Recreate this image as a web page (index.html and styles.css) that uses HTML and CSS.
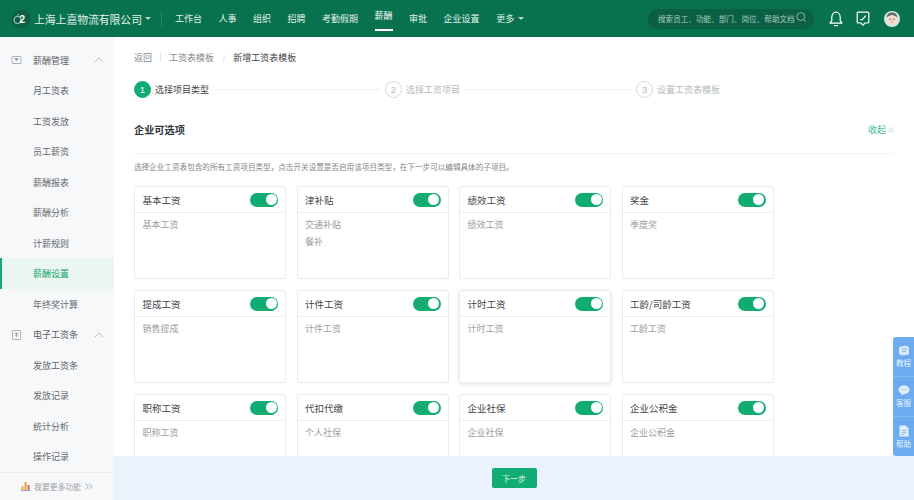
FILE: index.html
```html
<!DOCTYPE html>
<html>

<head>
    <meta charset="utf-8">
    <title>新增工资表模板</title>
    <link rel="stylesheet" href="styles.css">
</head>

<body>
    <header class="topbar">
        <svg class="logo" width="20" height="20" viewBox="0 0 20 20">
            <circle cx="10" cy="10" r="9.5" fill="#0b5f45" />
            <circle cx="6.5" cy="11" r="3.6" fill="none" stroke="#d5e6df" stroke-width="0.9" />
            <path d="M6 6.8 L8 5" stroke="#d5e6df" stroke-width="0.8" fill="none" />
            <text x="8.4" y="14" class="logo-two">2</text>
        </svg>
        <div class="company">上海上嘉物流有限公司</div>
        <span class="caret company-caret"></span>
        <span class="top-divider"></span>
        <nav class="nav">
            <a>工作台</a>
            <a>人事</a>
            <a>组织</a>
            <a>招聘</a>
            <a>考勤假期</a>
            <a class="nav-active">薪酬</a>
            <a>审批</a>
            <a>企业设置</a>
            <a>更多<span class="caret"></span></a>
        </nav>
        <div class="search">
            <span>搜索员工、功能、部门、岗位、帮助文档</span>
            <svg width="11" height="11" viewBox="0 0 11 11" fill="none" stroke="#a9cdbf" stroke-width="0.8">
                <circle cx="4.8" cy="4.6" r="3.9" />
                <path d="M7.6 7.5 L10.2 10" />
            </svg>
        </div>
        <svg class="top-icon" width="14" height="16" viewBox="0 0 14 16" fill="none" stroke="#fff" stroke-width="1.2">
            <path d="M1 12.2 H13 L11.2 9.6 V6.4 C11.2 3.6 9.5 1.2 7 1.2 C4.5 1.2 2.8 3.6 2.8 6.4 V9.6 Z" stroke-linejoin="round" />
            <path d="M5 14.6 H9" />
        </svg>
        <svg class="top-icon chat-icon" width="14" height="16" viewBox="0 0 14 16" fill="none" stroke="#fff" stroke-width="1.2">
            <path d="M2.2 1.2 H11.8 A1 1 0 0 1 12.8 2.2 V11 A1 1 0 0 1 11.8 12 H9 L7 14.2 L5 12 H2.2 A1 1 0 0 1 1.2 11 V2.2 A1 1 0 0 1 2.2 1.2 Z" stroke-linejoin="round" />
            <path d="M4.2 8.6 H6.4 L9.8 4.6" />
        </svg>
        <svg class="avatar" width="16" height="16" viewBox="0 0 16 16">
            <circle cx="8" cy="8" r="8" fill="#d9e6e6" />
            <path d="M2.6 6.6 C3 2.8 5.6 1.6 8 1.6 C10.6 1.6 13 2.8 13.4 6.6 L11.8 5.2 H4.2 Z" fill="#5d6b72" />
            <ellipse cx="8" cy="8.8" rx="4.4" ry="4.8" fill="#f6d9cc" />
            <circle cx="6.2" cy="8.2" r="0.6" fill="#3c3c3c" />
            <circle cx="9.8" cy="8.2" r="0.6" fill="#3c3c3c" />
            <path d="M7 11 H9" stroke="#d3746c" stroke-width="0.7" />
        </svg>
    </header>

    <div class="page">
        <aside class="sidebar">
            <div class="menu">
                <div class="menu-group">
                    <svg width="10" height="8" viewBox="0 0 10 8" fill="none" stroke="#8d9399" stroke-width="0.7">
                        <rect x="0.5" y="0.5" width="9" height="7" rx="0.6" />
                        <path d="M3.4 2.6 H6.6 L5 4.8 Z" fill="#8d9399" />
                    </svg>
                    <span>薪酬管理</span>
                    <svg class="chevron" width="10" height="6" viewBox="0 0 10 6" fill="none" stroke="#a6abb0" stroke-width="0.8">
                        <path d="M1 5 L5 1 L9 5" />
                    </svg>
                </div>
                <a class="menu-item">月工资表</a>
                <a class="menu-item">工资发放</a>
                <a class="menu-item">员工薪资</a>
                <a class="menu-item">薪酬报表</a>
                <a class="menu-item">薪酬分析</a>
                <a class="menu-item">计薪规则</a>
                <a class="menu-item menu-active">薪酬设置</a>
                <a class="menu-item">年终奖计算</a>
                <div class="menu-group">
                    <svg width="9" height="10" viewBox="0 0 9 10" fill="none" stroke="#8d9399" stroke-width="0.7">
                        <rect x="0.5" y="0.5" width="8" height="9" rx="0.6" />
                        <path d="M2.6 3 H6.4 M4.5 3 V7 M2.8 5 H6.2" />
                    </svg>
                    <span>电子工资条</span>
                    <svg class="chevron" width="10" height="6" viewBox="0 0 10 6" fill="none" stroke="#a6abb0" stroke-width="0.8">
                        <path d="M1 5 L5 1 L9 5" />
                    </svg>
                </div>
                <a class="menu-item">发放工资条</a>
                <a class="menu-item">发放记录</a>
                <a class="menu-item">统计分析</a>
                <a class="menu-item">操作记录</a>
            </div>
            <div class="more-features">
                <svg width="9" height="10" viewBox="0 0 9 10">
                    <rect x="0.5" y="5" width="2" height="4" fill="#e8b23c" />
                    <rect x="3.5" y="1" width="2" height="8" fill="#e8a13c" />
                    <rect x="6.5" y="4" width="2" height="5" fill="#d76b5b" />
                    <rect x="0" y="9" width="9" height="0.8" fill="#7c8fc8" />
                </svg>
                <span>我要更多功能</span>
                <svg width="8" height="7" viewBox="0 0 8 7" fill="none" stroke="#8f959b" stroke-width="0.8">
                    <path d="M0.6 0.6 L3.4 3.5 L0.6 6.4 M4.2 0.6 L7 3.5 L4.2 6.4" />
                </svg>
            </div>
        </aside>

        <main class="main">
            <div class="breadcrumb">
                <a>返回</a>
                <span class="crumb-bar"></span>
                <a>工资表模板</a>
                <span class="crumb-slash">/</span>
                <b>新增工资表模板</b>
            </div>

            <div class="steps">
                <div class="step step-current"><i>1</i><span>选择项目类型</span></div>
                <div class="step-line"></div>
                <div class="step"><i>2</i><span>选择工资项目</span></div>
                <div class="step-line"></div>
                <div class="step"><i>3</i><span>设置工资表模板</span></div>
            </div>

            <div class="section-head">
                <h3>企业可选项</h3>
                <a class="collapse">收起
                    <svg width="6" height="6" viewBox="0 0 6 6" fill="none" stroke="#7fd0b3" stroke-width="0.7">
                        <path d="M0.6 2.8 L3 0.6 L5.4 2.8 M0.6 5.4 L3 3.2 L5.4 5.4" />
                    </svg>
                </a>
            </div>
            <p class="hint">选择企业工资表包含的所有工资项目类型，点击开关设置是否启用该项目类型，在下一步可以编辑具体的子项目。</p>

            <div class="cards">
                <div class="card">
                    <div class="card-head"><span>基本工资</span><i class="switch"></i></div>
                    <div class="card-body"><p>基本工资</p></div>
                </div>
                <div class="card">
                    <div class="card-head"><span>津补贴</span><i class="switch"></i></div>
                    <div class="card-body"><p>交通补贴</p><p>餐补</p></div>
                </div>
                <div class="card">
                    <div class="card-head"><span>绩效工资</span><i class="switch"></i></div>
                    <div class="card-body"><p>绩效工资</p></div>
                </div>
                <div class="card">
                    <div class="card-head"><span>奖金</span><i class="switch"></i></div>
                    <div class="card-body"><p>季度奖</p></div>
                </div>
                <div class="card">
                    <div class="card-head"><span>提成工资</span><i class="switch"></i></div>
                    <div class="card-body"><p>销售提成</p></div>
                </div>
                <div class="card">
                    <div class="card-head"><span>计件工资</span><i class="switch"></i></div>
                    <div class="card-body"><p>计件工资</p></div>
                </div>
                <div class="card card-raised">
                    <div class="card-head"><span>计时工资</span><i class="switch"></i></div>
                    <div class="card-body"><p>计时工资</p></div>
                </div>
                <div class="card">
                    <div class="card-head"><span>工龄/司龄工资</span><i class="switch"></i></div>
                    <div class="card-body"><p>工龄工资</p></div>
                </div>
                <div class="card">
                    <div class="card-head"><span>职称工资</span><i class="switch"></i></div>
                    <div class="card-body"><p>职称工资</p></div>
                </div>
                <div class="card">
                    <div class="card-head"><span>代扣代缴</span><i class="switch"></i></div>
                    <div class="card-body"><p>个人社保</p></div>
                </div>
                <div class="card">
                    <div class="card-head"><span>企业社保</span><i class="switch"></i></div>
                    <div class="card-body"><p>企业社保</p></div>
                </div>
                <div class="card">
                    <div class="card-head"><span>企业公积金</span><i class="switch"></i></div>
                    <div class="card-body"><p>企业公积金</p></div>
                </div>
            </div>

            <div class="footer-bar">
                <button class="next-btn">下一步</button>
            </div>
        </main>
    </div>

    <div class="helper">
        <div class="helper-item">
            <svg width="12" height="11" viewBox="0 0 12 11">
                <path d="M1 2 L8 0.5 L11 2 V9.5 L4 10.5 L1 9 Z" fill="#d9e9fb" />
                <path d="M4 4 H9 M4 6.4 H8" stroke="#6fa9ec" stroke-width="0.8" />
            </svg>
            <span>教程</span>
        </div>
        <div class="helper-item">
            <svg width="12" height="11" viewBox="0 0 12 11">
                <path d="M6 0.5 C9.2 0.5 11.5 2.4 11.5 4.8 C11.5 7.2 9.2 9 6 9 L3 10.6 L3.4 8.4 C1.6 7.6 0.5 6.3 0.5 4.8 C0.5 2.4 2.8 0.5 6 0.5 Z" fill="#e3effc" />
                <circle cx="3.8" cy="4.8" r="0.6" fill="#6fa9ec" />
                <circle cx="6" cy="4.8" r="0.6" fill="#6fa9ec" />
                <circle cx="8.2" cy="4.8" r="0.6" fill="#6fa9ec" />
            </svg>
            <span>客服</span>
        </div>
        <div class="helper-item">
            <svg width="10" height="12" viewBox="0 0 10 12">
                <path d="M0.5 0.5 H6.5 L9.5 3.5 V11.5 H0.5 Z" fill="#e3effc" />
                <path d="M2.4 5.4 H7.6 M2.4 7.4 H7.6 M2.4 9.4 H6" stroke="#6fa9ec" stroke-width="0.7" />
            </svg>
            <span>帮助</span>
        </div>
    </div>
</body>

</html>
```

FILE: styles.css
```css
* {
    box-sizing: border-box;
}

body {
    margin: 0;
    width: 914px;
    height: 500px;
    overflow: hidden;
    position: relative;
    font-family: "Noto Sans CJK SC", "Noto Sans", sans-serif;
    color: #4a4f55;
    background-color: #fff;
}

p,
h3 {
    margin: 0;
}

/* top bar */
.topbar {
    height: 37px;
    background-color: #08724f;
    display: flex;
    align-items: center;
    padding-left: 11px;
    color: #e4f0eb;
}

.logo-two {
    font-family: "Liberation Sans", sans-serif;
    font-size: 10px;
    font-weight: 700;
    fill: #fff;
}

.logo {
    margin-right: 3px;
}

.company {
    font-size: 10.8px;
    width: 108px;
    white-space: nowrap;
}

.caret {
    display: inline-block;
    width: 0;
    height: 0;
    border-left: 3px solid transparent;
    border-right: 3px solid transparent;
    border-top: 3px solid #b5d5c8;
    margin-left: 4px;
    vertical-align: middle;
}

.company-caret {
    margin-left: 3px;
}

.top-divider {
    width: 1px;
    height: 14px;
    background-color: #2a8669;
    margin-left: 10px;
    margin-right: 13px;
}

.nav {
    display: flex;
    height: 37px;
    gap: 16.5px;
    font-size: 9px;
}

.nav a {
    display: flex;
    align-items: center;
    position: relative;
    white-space: nowrap;
}

.nav-active {
    color: #fff;
    border-bottom: 2px solid #fff;
    padding-top: 2px;
    height: 31px;
}

.search {
    width: 166px;
    height: 20px;
    margin-left: auto;
    border-radius: 10px;
    background-color: #0b5f45;
    display: flex;
    align-items: center;
    padding-left: 10px;
    font-size: 7.6px;
    color: #a9cdbf;
    white-space: nowrap;
}

.search svg {
    margin-left: 1px;
    margin-top: -2px;
}

.top-icon {
    margin-left: 15px;
}

.chat-icon {
    margin-left: 13px;
}

.avatar {
    margin-left: 14px;
    margin-right: 14px;
}

/* page */
.page {
    display: flex;
    height: 463px;
}

.sidebar {
    width: 114px;
    background-color: #f7f8fa;
    display: flex;
    flex-direction: column;
    justify-content: space-between;
    font-size: 9px;
}

.menu {
    padding-top: 7.75px;
}

.menu-group {
    height: 30.5px;
    display: flex;
    align-items: center;
    padding-left: 11px;
    padding-right: 10px;
    color: #5c6167;
}

.menu-group svg:first-child {
    width: 11px;
    margin-right: 11px;
}

.chevron {
    margin-left: auto;
}

.menu-item {
    display: flex;
    align-items: center;
    height: 30.5px;
    padding-left: 33px;
    color: #63686e;
}

.menu-active {
    background-color: #eaf6f1;
    border-left: 2px solid #10ac74;
    padding-left: 31px;
    color: #10a56f;
}

.more-features {
    height: 29px;
    border-top: 1px solid #e9ebee;
    display: flex;
    align-items: center;
    justify-content: center;
    gap: 4px;
    font-size: 7.8px;
    color: #9a9fa5;
}

/* main */
.main {
    flex: 1;
    position: relative;
    overflow: hidden;
    padding: 0 20px;
}

.breadcrumb {
    display: flex;
    align-items: center;
    height: 40px;
    font-size: 9px;
    color: #85898f;
}

.breadcrumb b {
    font-weight: 400;
    color: #3f4449;
}

.crumb-bar {
    width: 1px;
    height: 9px;
    background-color: #e2e4e7;
    margin: 0 8px;
}

.crumb-slash {
    color: #d0d3d6;
    margin: 0 8px;
    font-size: 8px;
}

.steps {
    display: flex;
    align-items: center;
    height: 18px;
    margin-top: 3px;
}

.step {
    display: flex;
    align-items: center;
    font-size: 9px;
    color: #b5b9bd;
    white-space: nowrap;
}

.step i {
    width: 17px;
    height: 17px;
    border-radius: 50%;
    border: 1px solid #d5d8db;
    display: flex;
    align-items: center;
    justify-content: center;
    font-style: normal;
    font-family: "Liberation Sans", sans-serif;
    font-size: 9.5px;
    margin-right: 4px;
}

.step-current {
    color: #3f4449;
}

.step-current i {
    background-color: #10ac74;
    border-color: #10ac74;
    color: #fff;
}

.step-line {
    flex: none;
    width: 166px;
    height: 1px;
    background-color: #eef0f2;
    margin: 0 5px;
}

.section-head {
    width: 760px;
    height: 32px;
    margin-top: 24px;
    border-bottom: 1px solid #f1f2f4;
    display: flex;
    justify-content: space-between;
    align-items: flex-start;
}

.section-head h3 {
    font-size: 10.2px;
    font-weight: 700;
    color: #2f3439;
    line-height: 16px;
}

.collapse {
    font-size: 9px;
    color: #3dbb8e;
    line-height: 16px;
    display: flex;
    align-items: center;
    gap: 2px;
}

.hint {
    font-size: 7.6px;
    line-height: 12px;
    color: #82878d;
    margin-top: 7px;
    white-space: nowrap;
}

.cards {
    display: grid;
    grid-template-columns: repeat(4, 152px);
    grid-auto-rows: 93px;
    column-gap: 10.5px;
    row-gap: 11px;
    margin-top: 13px;
}

.card {
    border: 1px solid #e9ebee;
    border-radius: 2px;
    background-color: #fff;
}

.card-raised {
    box-shadow: 0 1px 4px rgba(0, 0, 0, 0.12);
}

.card-head {
    height: 26px;
    border-bottom: 1px solid #eef0f2;
    display: flex;
    align-items: center;
    justify-content: space-between;
    padding: 0 7px 0 7.5px;
    font-size: 9.5px;
    color: #3f4449;
}

.card-body {
    padding: 4px 7.5px;
    font-size: 9px;
    color: #9a9ea3;
}

.card-body p {
    line-height: 16.5px;
}

.switch {
    display: block;
    width: 28px;
    height: 14px;
    border-radius: 7px;
    background-color: #10ac74;
    position: relative;
}

.switch::after {
    content: "";
    position: absolute;
    right: 1.5px;
    top: 1.5px;
    width: 11px;
    height: 11px;
    border-radius: 50%;
    background-color: #fff;
}

.footer-bar {
    position: absolute;
    left: 0;
    right: 0;
    bottom: 0;
    height: 44px;
    background-color: #eaf3fd;
    display: flex;
    align-items: center;
    justify-content: center;
}

.next-btn {
    width: 45px;
    height: 20px;
    border: 0;
    border-radius: 2px;
    background-color: #10ac74;
    color: #e8f7f1;
    font-family: inherit;
    font-size: 8px;
    padding: 0;
}

/* floating help */
.helper {
    position: absolute;
    right: 0;
    top: 337px;
    width: 21px;
    height: 119px;
    background-color: #6cabf0;
    border-radius: 3px 0 0 3px;
    display: flex;
    flex-direction: column;
}

.helper-item {
    flex: 1;
    display: flex;
    flex-direction: column;
    align-items: center;
    justify-content: center;
    gap: 2px;
    font-size: 7.6px;
    line-height: 10px;
    color: #e9f3fd;
    border-bottom: 1px solid #85baf3;
}

.helper-item:last-child {
    border-bottom: 0;
}
```
